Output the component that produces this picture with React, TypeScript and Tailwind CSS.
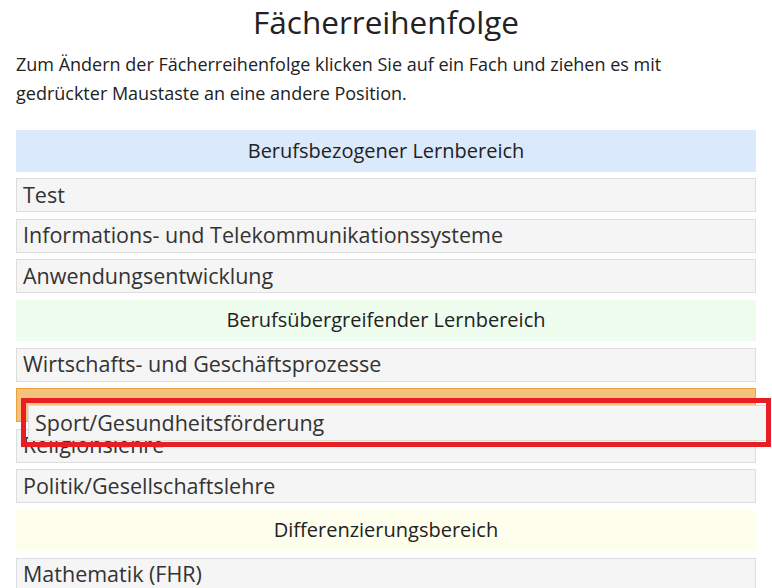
import React from "react";

type Row = { kind: "header"; text: string; bg: string } | { kind: "item"; text: string } | { kind: "placeholder" };

const rows: Row[] = [
  { kind: "header", text: "Berufsbezogener Lernbereich", bg: "bg-[#dae9fc]" },
  { kind: "item", text: "Test" },
  { kind: "item", text: "Informations- und Telekommunikationssysteme" },
  { kind: "item", text: "Anwendungsentwicklung" },
  { kind: "header", text: "Berufsübergreifender Lernbereich", bg: "bg-[#effdef]" },
  { kind: "item", text: "Wirtschafts- und Geschäftsprozesse" },
  { kind: "placeholder" },
  { kind: "item", text: "Religionslehre" },
  { kind: "item", text: "Politik/Gesellschaftslehre" },
  { kind: "header", text: "Differenzierungsbereich", bg: "bg-[#fefeec]" },
  { kind: "item", text: "Mathematik (FHR)" },
];

export default function App() {
  return (
    <div
      className="relative h-[588px] w-[772px] overflow-hidden bg-white text-[#222]"
      style={{ fontFamily: '"Open Sans", "Noto Sans", sans-serif' }}
    >
      <div className="px-4">
        <h1 className="pt-[2px] text-center text-[31.5px] leading-[40px] font-normal text-[#222]">Fächerreihenfolge</h1>
        <p className="mt-[8px] text-[18px] leading-[29px] text-[#222]">
          Zum Ändern der Fächerreihenfolge klicken Sie auf ein Fach und ziehen es mit gedrückter Maustaste an eine
          andere Position.
        </p>
        <div className="mt-[22px] flex flex-col gap-[6.5px]">
          {rows.map((r, i) => {
            if (r.kind === "header")
              return (
                <div key={i} className={`flex h-[41.5px] items-center justify-center text-[20px] text-[#222] ${r.bg}`}>
                  {r.text}
                </div>
              );
            if (r.kind === "placeholder")
              return <div key={i} className="h-[34px] border border-[#e9a23f] bg-[#f5c27b]" />;
            return (
              <div
                key={i}
                className="flex h-[34px] items-center border border-[#dddddd] bg-[#f5f5f5] px-[6px] text-[21.5px] text-[#333]"
              >
                {r.text}
              </div>
            );
          })}
        </div>
      </div>
      <div className="absolute left-[28px] top-[405px] flex h-[36px] w-[740px] items-center border border-[#dddddd] bg-[#f5f5f5] px-[6px] text-[21.5px] text-[#333]">
        Sport/Gesundheitsförderung
      </div>
      <div className="absolute left-[21px] top-[398px] h-[49px] w-[750px] border-[5px] border-[#e81e23]" />
    </div>
  );
}
